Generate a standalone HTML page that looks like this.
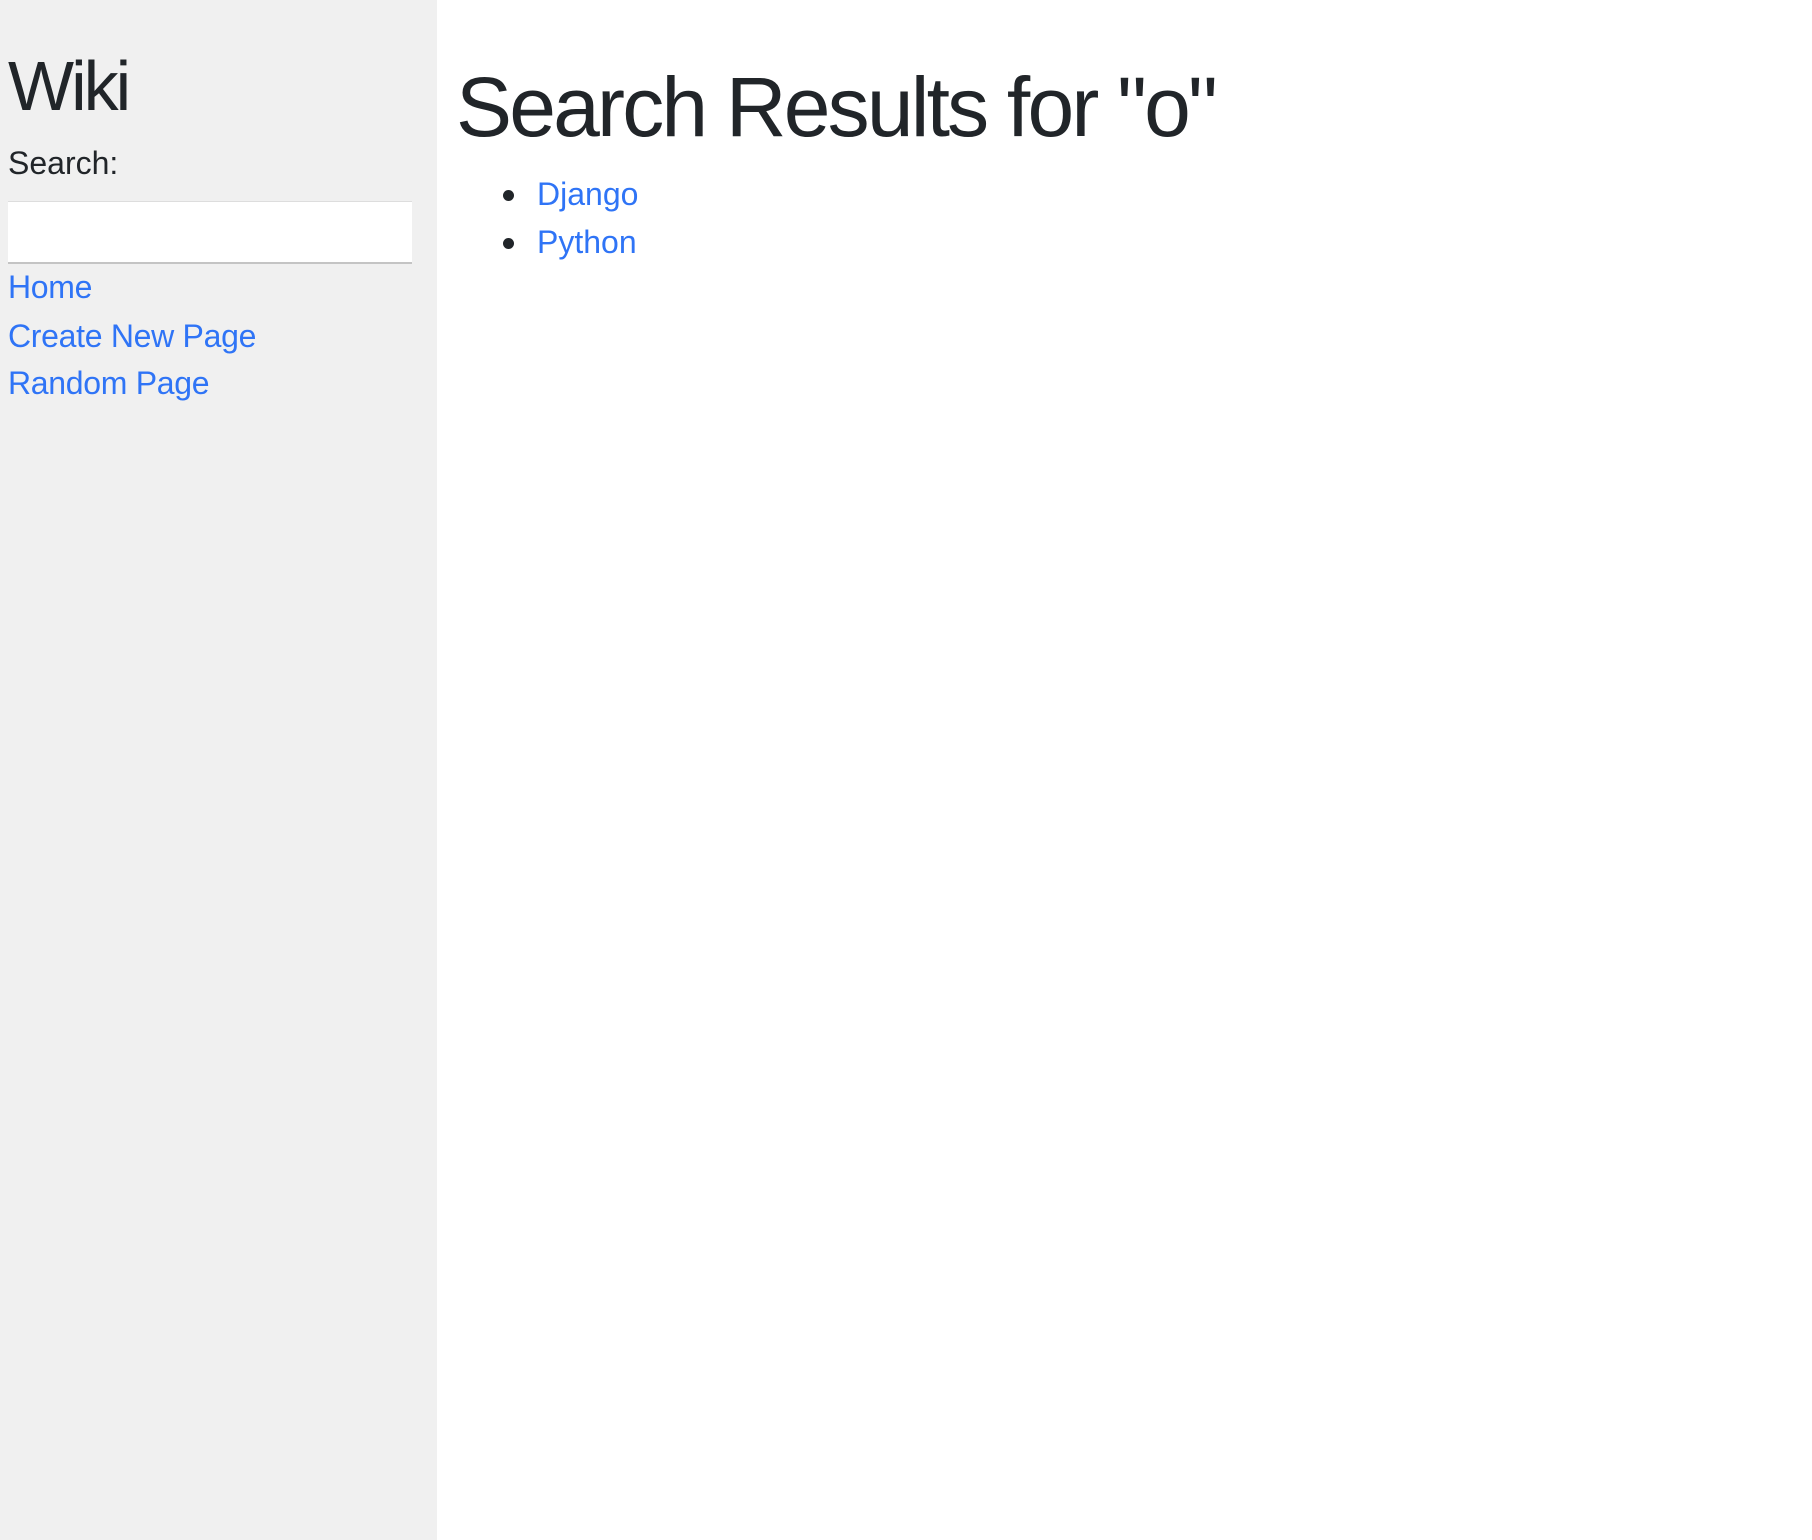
<!DOCTYPE html>
<html><head><meta charset="utf-8"><style>
html,body{margin:0;padding:0;width:1812px;height:1540px;background:#fff;font-family:"Liberation Sans",Arial,sans-serif;color:#212529;overflow:hidden}
.t{position:absolute;line-height:1;white-space:nowrap}
a{color:#2f74f6;text-decoration:none}
#side{position:absolute;left:0;top:0;width:437px;height:1540px;background:#f0f0f0}
.dot{position:absolute;width:11px;height:11px;border-radius:50%;background:#212529}
</style></head><body>
<div id="side"></div>
<div class="t" style="left:8px;top:51px;font-size:70px;letter-spacing:-3px">Wiki</div>
<div class="t" style="left:8px;top:147px;font-size:32px">Search:</div>
<div style="position:absolute;left:8px;top:201px;width:404px;height:60px;background:#fff;border-top:1px solid #ddd;border-bottom:2px solid #c4c4c4"></div>
<a class="t" style="left:8px;top:271px;font-size:32px;letter-spacing:-0.3px">Home</a>
<a class="t" style="left:8px;top:320px;font-size:32px;letter-spacing:-0.3px">Create New Page</a>
<a class="t" style="left:8px;top:367px;font-size:32px;letter-spacing:-0.3px">Random Page</a>
<div class="t" style="left:456px;top:65px;font-size:84px;letter-spacing:-2.8px">Search Results for "o"</div>
<div class="dot" style="left:503px;top:190px"></div>
<div class="dot" style="left:503px;top:238px"></div>
<a class="t" style="left:537px;top:178px;font-size:32px">Django</a>
<a class="t" style="left:537px;top:226px;font-size:32px">Python</a>
</body></html>
